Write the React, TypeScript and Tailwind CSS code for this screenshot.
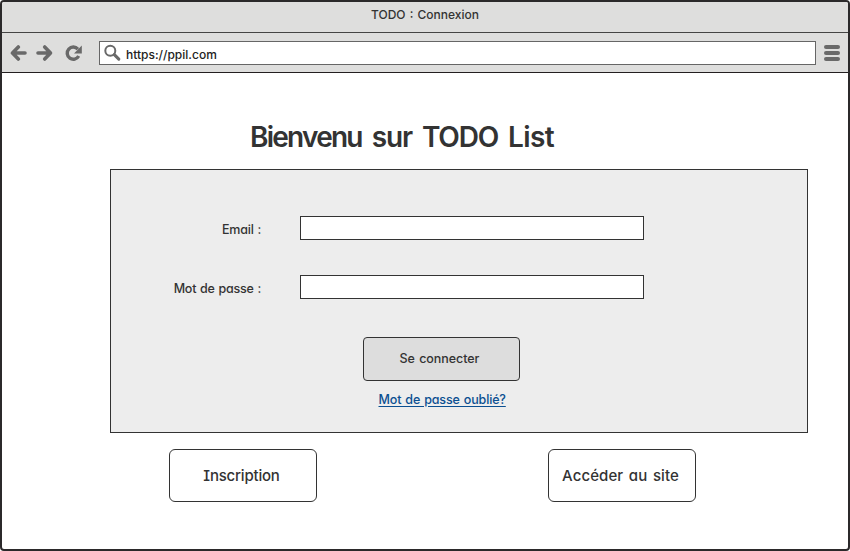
import React from 'react';

const sans = "font-['Inter','Open_Sans',sans-serif] [font-feature-settings:'cv11','cv08','ss03']";

function Toolbar() {
  return (
    <div className="flex h-[40px] items-start border-b border-[#231f20] bg-[#dededd] pl-[8px] pt-[8px]">
      <svg className="mt-[3px] h-[18px] w-[76px] shrink-0" viewBox="10 44 76 18" fill="none" stroke="#696969" strokeWidth="3.6" strokeLinecap="round" strokeLinejoin="round">
        <path d="M25 53H14M18.3 47L12.5 53L18.3 59" />
        <path d="M38 53H49M44.7 47L50.5 53L44.7 59" />
        <path d="M77.9 49.1A6.1 6.1 0 1 0 78.7 56" strokeWidth="3.4" strokeLinecap="butt" />
        <path d="M81.8 45.6V53.6H74Z" fill="#696969" stroke="none" />
      </svg>
      <div className="ml-[13px] flex h-[24px] w-[717px] items-start border border-[#666] bg-white">
        <svg className="ml-[3px] mt-[2px] h-[19px] w-[19px] shrink-0" viewBox="0 0 19 19" fill="none" stroke="#696969">
          <circle cx="7.3" cy="6.7" r="5" strokeWidth="2" />
          <path d="M11.3 10.7L15.8 15.2" strokeWidth="3.1" strokeLinecap="round" />
        </svg>
        <span className="ml-[4px] mt-[4px] whitespace-nowrap text-[12px] font-medium leading-[18px] text-[#222]">https://ppil.com</span>
      </div>
      <div className="ml-[8px] mt-[4px] flex flex-col gap-[2px]">
        <div className="h-[4px] w-[16px] rounded-full bg-[#696969]" />
        <div className="h-[4px] w-[16px] rounded-full bg-[#696969]" />
        <div className="h-[4px] w-[16px] rounded-full bg-[#696969]" />
      </div>
    </div>
  );
}

function Field({ label, type }: { label: string; type: string }) {
  return (
    <label className="flex h-[24px] items-center">
      <span className="w-[150px] whitespace-nowrap pt-[4px] text-right text-[12.5px] font-medium leading-[18px] tracking-[-0.2px] [word-spacing:0.6px]">{label}</span>
      <input type={type} className="ml-[39px] h-[24px] w-[344px] border border-[#333] bg-white px-1 outline-none" />
    </label>
  );
}

export default function App() {
  return (
    <div className={`flex h-[551px] w-[850px] flex-col overflow-hidden rounded-[4px] border-2 border-[#2b292a] bg-white text-[#333] ${sans}`}>
      <header className="flex h-[31px] shrink-0 justify-center border-b border-[#444] bg-[#dededd] pt-[4px]">
        <span className="whitespace-nowrap text-[12px] font-medium leading-[18px] [word-spacing:1px]">TODO : Connexion</span>
      </header>
      <Toolbar />
      <main className="flex flex-1 flex-col pl-[108px]">
        <h1 className="ml-[140px] mt-[44px] h-[40px] whitespace-nowrap text-[28px] font-semibold leading-[40px] tracking-[-1.2px] [word-spacing:4.2px]">
          <span className="tracking-[-1.75px]">Bienvenu</span> sur TODO <span className="tracking-[-0.6px]">List</span>
        </h1>
        <form className="mt-[12px] flex h-[264px] w-[698px] flex-col border border-[#333] bg-[#ededed] pt-[46px]">
          <Field label="Email :" type="text" />
          <div className="h-[35px]" />
          <Field label="Mot de passe :" type="password" />
          <button type="button" className="ml-[252px] mt-[38px] h-[44px] w-[157px] rounded-[4px] border border-[#333] bg-[#ddd] pr-[4px] text-[12.5px] font-medium leading-[18px] tracking-[-0.05px] [word-spacing:1px]">Se connecter</button>
          <a className="ml-[267.5px] mt-[10px] self-start whitespace-nowrap text-[12.5px] font-medium leading-[18px] tracking-[-0.15px] [word-spacing:0.9px] text-[#0b4f91] underline underline-offset-2">Mot de passe oublié?</a>
        </form>
        <div className="ml-[59px] mt-[16px] flex gap-[231px]">
          <button type="button" className="h-[53px] w-[148px] rounded-[6px] border border-[#333] bg-white pr-[3px] text-[15px] font-medium leading-[20px] tracking-[-0.2px]">Inscription</button>
          <button type="button" className="h-[53px] w-[148px] rounded-[6px] border border-[#333] bg-white pr-[3px] text-[15px] font-medium leading-[20px] tracking-[0.1px] [word-spacing:1.5px]">Accéder au site</button>
        </div>
      </main>
    </div>
  );
}
